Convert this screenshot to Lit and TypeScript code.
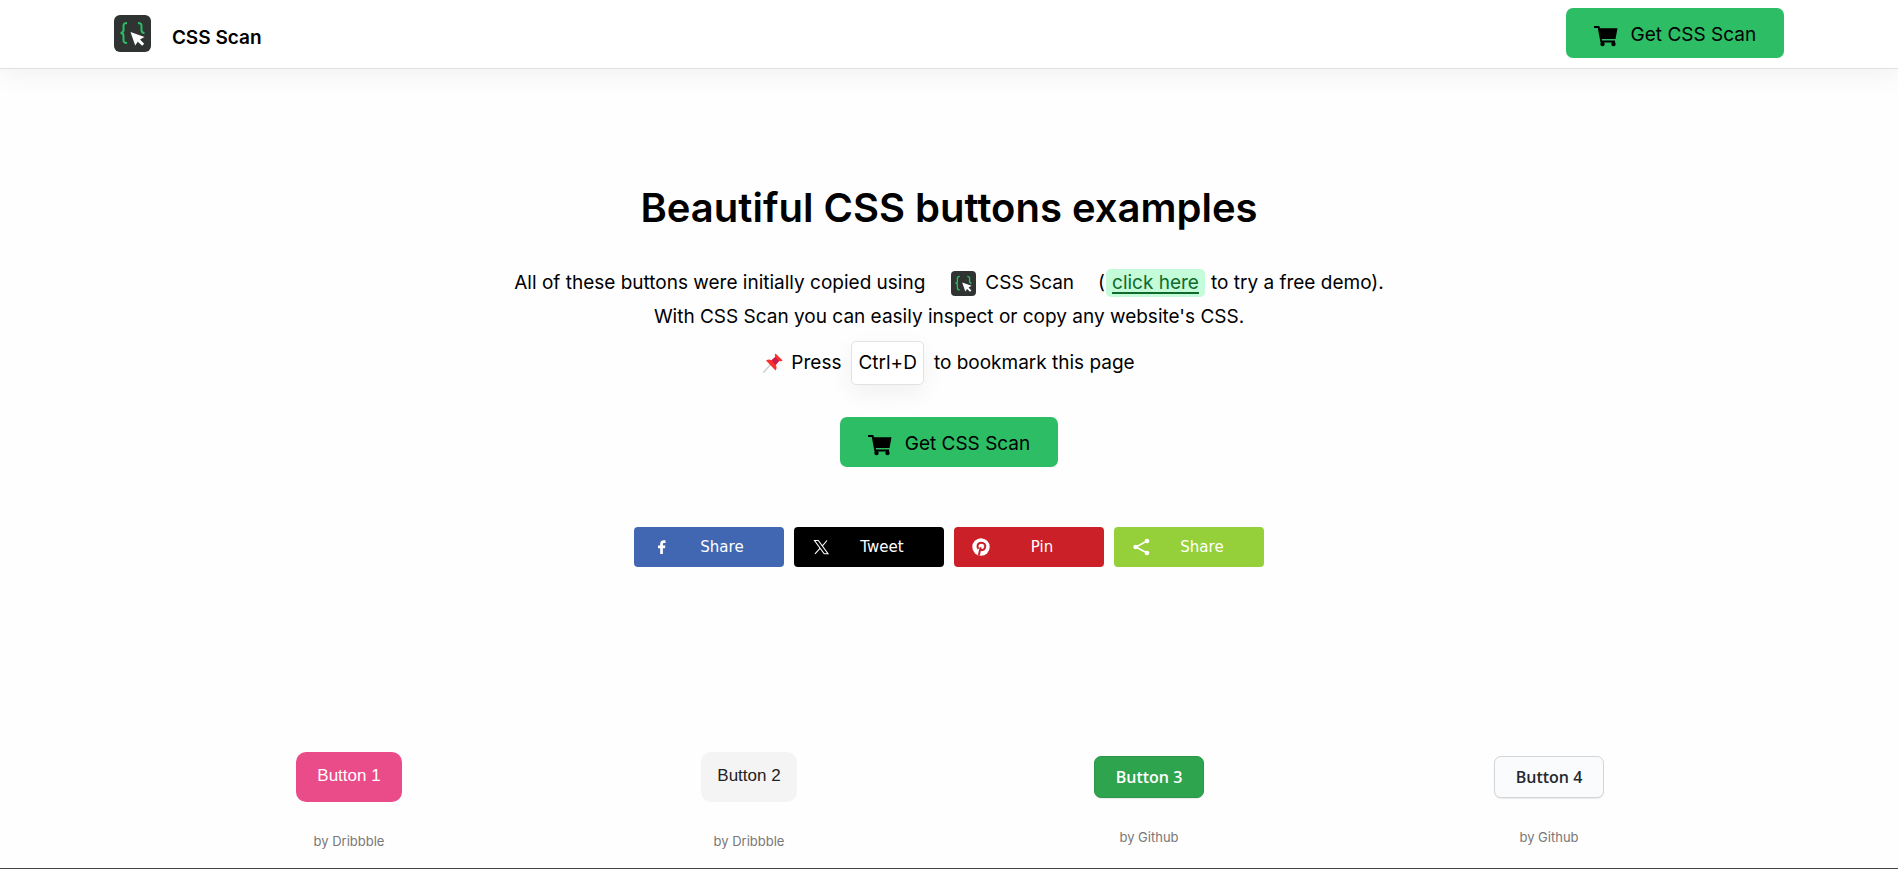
import { LitElement, html, css, svg } from "lit";
import { customElement } from "lit/decorators.js";

const logo = html`<svg class="logo" viewBox="0 0 37 37" aria-hidden="true">
  <rect width="37" height="37" rx="6" fill="#2f3331" />
  <path d="M13 8c-3 0-3.500 1-3.500 3v4c0 2-1 3-3 3 2 0 3 1 3 3v4c0 2 .5 3 3.500 3" fill="none" stroke="#2dbd64" stroke-width="2" />
  <path d="M24 8c3 0 3.500 1 3.500 3v4c0 2 1 3 3 3" fill="none" stroke="#2dbd64" stroke-width="2" />
  <path d="M16.500 17l4.700 13.500 2.600-3.700 4.400 4 2-2-4.200-4.300 4.500-2.500z" fill="#fff" />
</svg>`;

const cart = html`<svg class="cart" viewBox="0 0 24 22" aria-hidden="true">
  <path d="M0 1h5.200l.9 2.200H23.500L21.500 14H7.800l.3 1.500H21v2H6.500L3.800 3H0z" fill="#000" />
  <circle cx="8.500" cy="19" r="2.200" fill="#000" /><circle cx="19.500" cy="19" r="2.200" fill="#000" />
</svg>`;

const pin = html`<svg class="pin" viewBox="0 0 20 20" role="img" aria-label="Pushpin">
  <path d="M7.500 11.500L.8 19.200" stroke="#c9d3da" stroke-width="1.600" stroke-linecap="round" />
  <path d="M3 7.500c2-1.300 4-1.200 5.500-.3L12.300 4c-.6-1.300-.5-2.600.2-3.600l7.200 7c-1 .9-2.500 1-3.700.5l-3.300 4c1.200 1.600 1.200 3.600-.2 5.600z" fill="#f8312f" />
  <path d="M8.500 7.200L12.300 4l3.700 3.900-3.300 4z" fill="#ca1b4a" />
</svg>`;

const shareIcons: Record<string, unknown> = {
  facebook: svg`<path d="M8.200 16V10.300H6V7.600h2.200V5.800C8.200 3.500 9.500 2.300 11.600 2.300c.9 0 1.700.1 1.900.1v2.500h-1.300c-1 0-1.300.5-1.300 1.300v1.400h2.500l-.4 2.700h-2.100V16z" fill="#fff"/>`,
  x: svg`<path d="M2.500 2.500h3.800l9.700 13.300h-3.800zM15 2.500L10 8.300M8.200 10.200L3 15.800" fill="none" stroke="#fff" stroke-width="1.100"/>`,
  pinterest: svg`<circle cx="9" cy="9" r="8.700" fill="#fff"/><path d="M7 17.500c.2-2.800 1-5 1.700-8.200M6.500 10.800C4.500 8.500 5.500 4.700 9.300 4.700c3.200 0 4.400 2.200 3.800 4.600-.6 2.600-3.400 3.600-4.700 1.900" fill="none" stroke="#cb2027" stroke-width="2"/>`,
  share: svg`<path d="M15 3L4 9l11 6" fill="none" stroke="#fff" stroke-width="1.600"/><circle cx="15" cy="3" r="2.300" fill="#fff"/><circle cx="3.500" cy="9" r="2.200" fill="#fff"/><circle cx="15" cy="15" r="2.300" fill="#fff"/>`,
};

const shares = [
  { kind: "facebook", label: "Share" },
  { kind: "x", label: "Tweet" },
  { kind: "pinterest", label: "Pin" },
  { kind: "share", label: "Share" },
];

const examples = [
  { label: "Button 1", by: "Dribbble", style: "pink" },
  { label: "Button 2", by: "Dribbble", style: "pale" },
  { label: "Button 3", by: "Github", style: "green" },
  { label: "Button 4", by: "Github", style: "outline" },
];

@customElement("app-root")
export class AppRoot extends LitElement {
  static styles = css`
    :host {
      display: flex;
      flex-direction: column;
      box-sizing: border-box;
      min-height: 100vh;
      background: #fefefe;
      border-bottom: 1px solid #444;
      color: #000;
      font: 400 19px/34px Inter, "Liberation Sans", sans-serif;
    }
    a { color: inherit; text-decoration: none; }
    svg { display: block; flex: none; }
    button { font: inherit; border: 0; cursor: pointer; }
    header {
      display: flex;
      align-items: center;
      justify-content: space-between;
      padding: 8px 6% 10px;
      background: #fff;
      border-bottom: 1px solid #e0e0e0;
      box-shadow: 0 8px 24px rgba(0, 0, 0, 0.05);
    }
    .brand { display: flex; align-items: center; gap: 21px; font-weight: 600; }
    .brand span { padding-top: 10px; }
    .brand .logo { width: 37px; height: 37px; }
    .buy {
      display: inline-flex;
      align-items: center;
      gap: 13px;
      box-sizing: border-box;
      height: 50px;
      padding: 0 28px;
      border-radius: 7px;
      background: #2dbd64;
      white-space: nowrap;
    }
    .buy span { padding-top: 4px; }
    .cart { width: 24px; height: 22px; margin-top: 6px; }
    .hero { display: flex; flex-direction: column; align-items: center; padding: 114px 20px 0; text-align: center; }
    h1 { margin: 0; font-size: 40px; line-height: 50px; font-weight: 600; }
    .line { margin: 0; display: flex; flex-wrap: wrap; justify-content: center; align-items: center; }
    .intro { margin-top: 33px; }
    .product { display: inline-flex; align-items: center; gap: 9px; margin: 0 24px 0 26px; }
    .product .logo { width: 25px; height: 25px; }
    .demo {
      margin: 0 6px 0 1px;
      padding: 0 6px;
      border-radius: 5px;
      background: #c4fbd8;
      color: #0f6b2c;
      line-height: 28px;
      text-decoration: underline;
      text-decoration-thickness: 2px;
      text-underline-offset: 3px;
    }
    .bookmark { margin-top: 7px; }
    .pin { width: 20px; height: 20px; margin-right: 8px; }
    kbd {
      margin: 0 10px;
      padding: 4px 6px;
      border: 1px solid #e2e2e2;
      border-radius: 5px;
      background: #fff;
      box-shadow: 0 8px 24px rgba(0, 0, 0, 0.06);
      font: inherit;
    }
    .hero .buy { margin-top: 32px; }
    .shares { display: flex; flex-wrap: wrap; justify-content: center; gap: 10px; margin-top: 60px; }
    .share {
      display: flex;
      align-items: center;
      width: 150px;
      height: 40px;
      padding: 0 34px 0 18px;
      box-sizing: border-box;
      border-radius: 4px;
      color: #fff;
      font: 15px/20px Verdana, "DejaVu Sans", sans-serif;
    }
    .share svg { width: 18px; height: 18px; }
    .share span { flex: 1; padding-left: 24px; }
    .facebook { background: #4267b2; }
    .x { background: #000; }
    .pinterest { background: #cb2027; }
    .other { background: #95d03a; }
    .examples {
      display: grid;
      grid-template-columns: repeat(4, 1fr);
      align-items: start;
      width: 100%;
      max-width: 1600px;
      margin: 0 auto;
      padding-top: 185px;
    }
    .example { display: flex; flex-direction: column; align-items: center; }
    .example p { margin: 0; color: #777; font-size: 13px; line-height: 20px; }
    .sample { box-sizing: border-box; white-space: nowrap; }
    .pink, .pale {
      height: 50px;
      margin-bottom: 29px;
      border-radius: 10px;
      font: 17px/20px "Liberation Sans", Arial, sans-serif;
    }
    .pink { padding: 0 21px 3px; background: #ea4c89; color: #fff; }
    .pale { padding: 0 16px 3px; background: #f4f4f4; color: #222; }
    .green, .outline {
      height: 42px;
      margin: 4px 0 29px;
      padding: 0 21px;
      border: 1px solid #2c974b;
      border-radius: 7px;
      background: #2ea44f;
      color: #fff;
      box-shadow: 0 1px 1px rgba(0, 0, 0, 0.08);
      font: 600 16px/24px "Open Sans", sans-serif;
    }
    .outline { border-color: #d4d5d6; background: #fafbfc; color: #24292e; }
    @media (max-width: 800px) {
      .examples { grid-template-columns: repeat(2, 1fr); gap: 40px 0; }
    }
  `;

  render() {
    return html`
      <header>
        <a class="brand" href="#">${logo}<span>CSS Scan</span></a>
        <a class="buy" href="#">${cart}<span>Get CSS Scan</span></a>
      </header>
      <main>
        <section class="hero">
          <h1>Beautiful CSS buttons examples</h1>
          <p class="line intro">
            <span>All of these buttons were initially copied using</span>
            <a class="product" href="#">${logo}<span>CSS Scan</span></a>
            <span>(</span><a class="demo" href="#">click here</a><span>to try a free demo).</span>
          </p>
          <p class="line">With CSS Scan you can easily inspect or copy any website's CSS.</p>
          <p class="line bookmark">${pin}<span>Press</span><kbd>Ctrl+D</kbd><span>to bookmark this page</span></p>
          <a class="buy" href="#">${cart}<span>Get CSS Scan</span></a>
          <nav class="shares" aria-label="Share this page">
            ${shares.map(
              (s) => html`<a class="share ${s.kind === "share" ? "other" : s.kind}" href="#">
                <svg viewBox="0 0 18 18" aria-hidden="true">${shareIcons[s.kind]}</svg><span>${s.label}</span>
              </a>`
            )}
          </nav>
        </section>
        <section class="examples">
          ${examples.map(
            (e) => html`<div class="example">
              <button class="sample ${e.style}">${e.label}</button>
              <p>by <a href="#">${e.by}</a></p>
            </div>`
          )}
        </section>
      </main>
    `;
  }
}
